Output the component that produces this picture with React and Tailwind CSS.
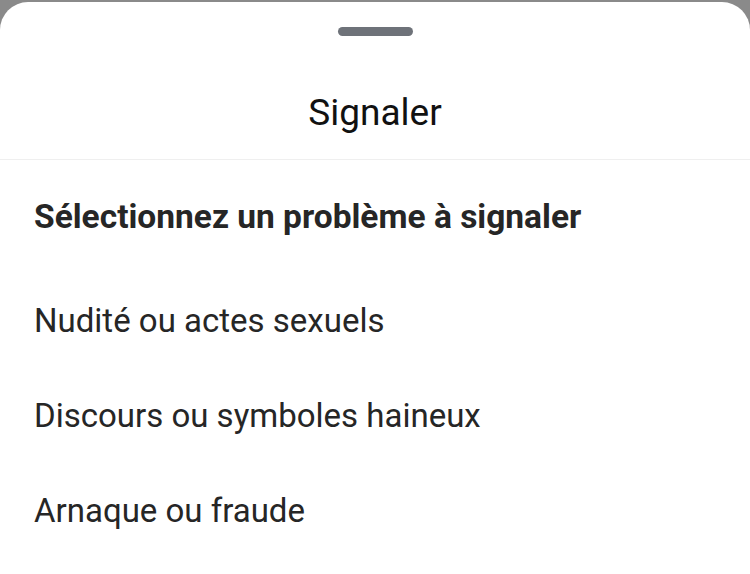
export default function App() {
  const reasons = [
    "Nudité ou actes sexuels",
    "Discours ou symboles haineux",
    "Arnaque ou fraude",
  ];

  return (
    <div className="h-[574px] w-[750px] overflow-hidden bg-[#8a8a8a] pt-[2px] font-['Roboto',sans-serif] text-[#262626]">
      <div className="h-full rounded-t-[28px] bg-white">
        {/* drag handle */}
        <div className="flex justify-center pt-[25px]">
          <div className="h-[9px] w-[75px] rounded-full bg-[#6e7279]" />
        </div>

        <div className="flex h-[124px] items-center justify-center border-b border-[#efefef] pt-[30px]">
          <h1 className="text-[37px] leading-none text-[#111]">Signaler</h1>
        </div>

        <div className="px-[34px]">
          <h2 className="flex h-[113px] items-center text-[33.5px] font-bold leading-none">
            Sélectionnez un problème à signaler
          </h2>
          <ul>
            {reasons.map((r) => (
              <li key={r} className="flex h-[95px] items-center text-[33px] leading-none">
                {r}
              </li>
            ))}
          </ul>
        </div>
      </div>
    </div>
  );
}
